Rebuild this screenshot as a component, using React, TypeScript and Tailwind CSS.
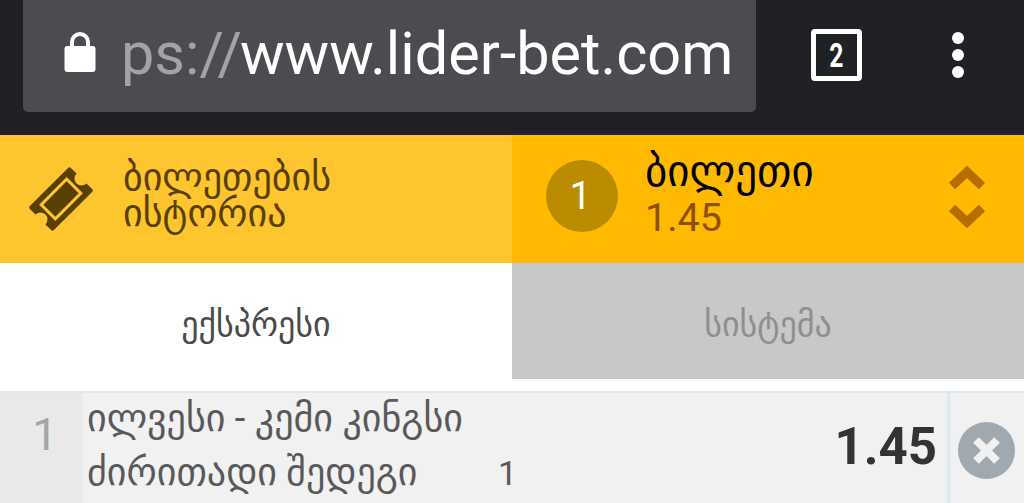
import React from 'react';

const font = "font-['Roboto','DejaVu_Sans',sans-serif]";

function TicketIcon() {
  return (
    <svg width="64" height="64" viewBox="0 0 64 64">
      <g transform="rotate(-45 32 32)">
        <path
          d="M3 17a2 2 0 0 1 2-2h54a2 2 0 0 1 2 2v8a7 7 0 0 0 0 14v8a2 2 0 0 1-2 2H5a2 2 0 0 1-2-2v-8a7 7 0 0 0 0-14z"
          fill="#574000"
        />
        <rect x="14" y="22" width="36" height="20" fill="none" stroke="#ffc52e" strokeWidth="3" />
      </g>
    </svg>
  );
}

function App() {
  return (
    <div className={`${font} w-[1024px] h-[503px] overflow-hidden bg-white`}>
      {/* browser bar */}
      <div className="h-[135px] bg-[#202125] flex items-start pl-[23px]">
        <div className="w-[733px] h-[112px] bg-[#4c4c50] rounded-b-[5px] flex items-center pl-[41px] pb-[2px]">
          <svg width="32" height="42" viewBox="0 0 32 42" className="mb-[5px]">
            <path d="M8 19v-9a8 8 0 0 1 16 0v9" fill="none" stroke="#fff" strokeWidth="4" />
            <rect x="0.500" y="14" width="31" height="26" rx="3" fill="#fff" />
          </svg>
          <div className="ml-[25px] text-[59.400px] leading-none whitespace-nowrap">
            <span className="text-[#a3a3a5] mr-[-2px]">ps://</span>
            <span className="text-white">www.lider-bet.com</span>
          </div>
        </div>
        <div className="ml-[55px] mt-[29px] w-[51px] h-[52px] border-[5px] border-white rounded-[4px] flex items-center justify-center text-white text-[33px] font-bold leading-none">
          <span className="scale-x-75">2</span>
        </div>
        <div className="ml-[90px] mt-[32px] flex flex-col gap-[5px]">
          <div className="w-[12px] h-[12px] rounded-full bg-white" />
          <div className="w-[12px] h-[12px] rounded-full bg-white" />
          <div className="w-[12px] h-[12px] rounded-full bg-white" />
        </div>
      </div>

      {/* ticket header */}
      <div className="h-[128px] flex">
        <div className="w-[512px] bg-[#ffc52e] flex items-center pl-[29px]">
          <TicketIcon />
          <div className="ml-[30px] text-[#574000] text-[38px] leading-[36px] pb-[8px]">
            <div>ბილეთების</div>
            <div>ისტორია</div>
          </div>
        </div>
        <div className="w-[512px] bg-[#ffb900] flex items-center pl-[34px]">
          <div className="w-[72px] h-[72px] mb-[6px] pr-[3px] rounded-full bg-[#bb8c00] text-white text-[38px] flex items-center justify-center">
            1
          </div>
          <div className="ml-[27px] w-[303px] pb-[6px]">
            <div className="text-black text-[43px] leading-[44px] -mt-[5px] mb-[5px]">ბილეთი</div>
            <div className="text-[#8c5000] text-[39.500px] leading-[40px]">1.45</div>
          </div>
          <svg width="38" height="66" viewBox="0 0 38 66" className="mb-[4px]">
            <path d="M4 22 19 8l15 14" fill="none" stroke="#b56f00" strokeWidth="9" />
            <path d="M4 44l15 14 15-14" fill="none" stroke="#b56f00" strokeWidth="9" />
          </svg>
        </div>
      </div>

      {/* tabs */}
      <div className="h-[116px] flex text-[34px]">
        <div className="w-[512px] flex items-center justify-center pt-[7px] text-[#4a4a4a]">ექსპრესი</div>
        <div className="w-[512px] bg-[#c8c8c8] flex items-center justify-center pt-[7px] text-[#8f8f8f]">სისტემა</div>
      </div>

      {/* selected bet */}
      <div className="mt-[12px] h-[112px] border-t-[2px] border-[#dce9f1] flex bg-[#f1f1f1]">
        <div className="w-[83px] bg-[#e9e9e9] flex justify-center pl-[7px] pt-[17px] text-[#a5a5a5] text-[45px] leading-[50px]">
          1
        </div>
        <div className="w-[864px] flex justify-between">
          <div className="pl-[4px] -mt-[2px] text-[#59595b] text-[38px] leading-[54px]">
            <div>ილვესი - კემი კინგსი</div>
            <div className="flex items-baseline">
              <span className="w-[411px]">ძირითადი შედეგი</span>
              <span className="text-[34px]">1</span>
            </div>
          </div>
          <div className="pr-[10px] pt-[26px] text-[#333333] text-[51px] leading-[56px] font-bold">1.45</div>
        </div>
        <div className="flex-1 border-l-[3px] border-[#dce9f1] pl-[8px] pt-[29px]">
          <svg width="57" height="57" viewBox="0 0 57 57">
            <circle cx="28.500" cy="28.500" r="28.500" fill="#a1a9b0" />
            <path d="M18 18l21 21M39 18 18 39" stroke="#f1f1f1" strokeWidth="8" />
          </svg>
        </div>
      </div>
    </div>
  );
}

export default App;
